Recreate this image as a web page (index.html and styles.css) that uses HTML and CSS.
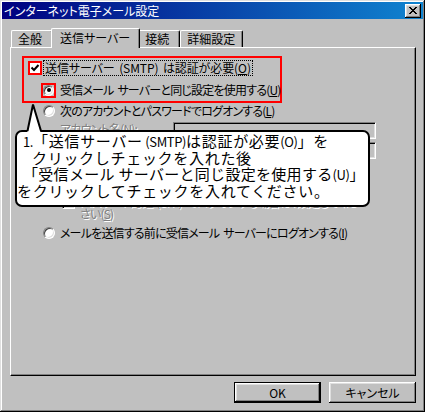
FILE: index.html
```html
<!DOCTYPE html>
<html lang="ja">
<head>
<meta charset="utf-8">
<title>インターネット電子メール設定</title>
<link rel="stylesheet" href="styles.css">
</head>
<body>
<div class="window">
  <div class="titlebar">
    <span class="title">インターネット電子メール設定</span>
    <span class="close"><svg width="8" height="7" viewBox="0 0 8 7"><path d="M0 0h2v1H0zM6 0h2v1H6zM1 1h2v1H1zM5 1h2v1H5zM2 2h4v1H2zM3 3h2v1H3zM2 4h4v1H2zM1 5h2v1H1zM5 5h2v1H5zM0 6h2v1H0zM6 6h2v1H6z" fill="#000"/></svg></span>
  </div>
  <div class="tabs">
    <div class="tab">全般</div>
    <div class="tab active">送信サーバー</div>
    <div class="tab">接続</div>
    <div class="tab">詳細設定</div>
  </div>
  <div class="panel">
    <div class="group">
      <div class="row row-auth">
        <span class="check hl"><svg width="10" height="10" viewBox="0 0 10 10"><polyline points="1.5,4.5 4,7 8.5,2" fill="none" stroke="#000" stroke-width="2"/></svg></span>
        <span class="focus">送信サーバー (SMTP) は認証が必要(<u>O</u>)</span>
      </div>
      <div class="row row-same">
        <span class="hlbox"><span class="radio small on"></span></span>
        <span class="lbl">受信メール サーバーと同じ設定を使用する(<u>U</u>)</span>
      </div>
    </div>
    <div class="row row-radio">
      <span class="radio"></span>
      <span class="lbl">次のアカウントとパスワードでログオンする(<u>L</u>)</span>
    </div>
    <div class="field">
      <span class="flabel disabled">アカウント名(<u>N</u>):</span>
      <span class="input"></span>
    </div>
    <div class="field">
      <span class="flabel disabled">パスワード(<u>P</u>):</span>
      <span class="input"></span>
    </div>
    <div class="row row-sub">
      <span class="check dis"></span>
      <span class="disabled">パスワードを保存する(<u>R</u>)</span>
    </div>
    <div class="row row-sub2">
      <span class="check dis"></span>
      <span class="disabled">セキュリティで保護されたパスワード認証 (SPA) に対応(<u>Q</u>)</span>
    </div>
    <div class="row row-wrap">
      <span class="check dis"></span>
      <span class="disabled wraplbl">パスワード認証 (SPA) でログオンする場合は、設定してくだ<br>さい(<u>S</u>)</span>
    </div>
    <div class="row row-radio last">
      <span class="radio"></span>
      <span class="lbl">メールを送信する前に受信メール サーバーにログオンする(<u>I</u>)</span>
    </div>

    <div class="callout">
      <svg class="pointer" width="17" height="31" viewBox="0 0 17 31"><polygon points="1,31 7,1 15,31" fill="#fff"/><polyline points="1.5,28 7,1.5 15,28" fill="none" stroke="#000" stroke-width="2"/></svg>
      <div class="cl l1"><span class="hw">1.</span>「送信サーバー<span class="hw"> (SMTP)</span>は認証が必要<span class="hw">(O)</span>」を</div>
      <div class="cl l2">クリックしチェックを入れた後</div>
      <div class="cl l3">「受信メール サーバーと同じ設定を使用する<span class="hw">(U)</span>」</div>
      <div class="cl l4">をクリックしてチェックを入れてください。</div>
    </div>
  </div>
  <div class="buttons">
    <span class="btn default">OK</span>
    <span class="btn">キャンセル</span>
  </div>
</div>
</body>
</html>
```

FILE: styles.css
```css
* { box-sizing: border-box; }
html, body { margin: 0; padding: 0; background: #c0c0c0; }
body {
  font-family: "Noto Sans CJK JP", "Noto Sans", sans-serif;
  font-size: 12px;
  color: #000;
  font-feature-settings: "palt";
}
u { text-decoration: underline; text-underline-offset: 1px; }

.window {
  width: 425px;
  height: 412px;
  padding: 2px;
  background: #c0c0c0;
  box-shadow: inset -1px -1px #000, inset 1px 1px #dfdfdf, inset -2px -2px #808080, inset 2px 2px #fff;
}

.titlebar {
  height: 17px;
  display: flex;
  align-items: center;
  justify-content: space-between;
  padding: 0 2px 0 2px;
  background: linear-gradient(90deg, #000080, #1084d0);
}
.title { color: #fff; font-size: 12px; line-height: 14px; }
.close {
  width: 16px;
  height: 14px;
  display: flex;
  align-items: center;
  justify-content: center;
  background: #c0c0c0;
  box-shadow: inset -1px -1px #000, inset 1px 1px #fff, inset -2px -2px #808080, inset 2px 2px #dfdfdf;
}

.tabs {
  display: flex;
  align-items: flex-end;
  height: 19px;
  margin: 9px 0 0 9px;
  position: relative;
  z-index: 2;
}
.tab {
  height: 17px;
  min-width: 42px;
  padding: 1px 7px 0 6px;
  line-height: 14px;
  border-top: 1px solid #fff;
  border-left: 1px solid #fff;
  border-right: 1px solid #000;
  border-radius: 2px 2px 0 0;
  box-shadow: inset -1px 0 #808080;
  background: #c0c0c0;
}
.tab.active {
  height: 20px;
  margin: 0 -2px -1px;
  padding: 2px 9px 0 8px;
  position: relative;
  z-index: 3;
}

.panel {
  position: relative;
  width: 406px;
  height: 329px;
  margin-left: 8px;
  padding: 8px 11px 0 11px;
  border: 1px solid;
  border-color: #fff #000 #000 #fff;
  box-shadow: inset -1px -1px #808080;
  letter-spacing: -0.8px;
  word-spacing: 2px;
}

.row { display: flex; align-items: center; height: 14px; line-height: 14px; white-space: nowrap; }
.lbl { flex: none; }

.group {
  width: 260px;
  height: 47px;
  border: 2px solid #ff0000;
}
.row-auth { margin-top: 3px; padding-left: 4px; gap: 2px; }
.row-same { margin-top: 8px; padding-left: 17px; gap: 4px; }
.row-radio { margin-top: 1px; padding-left: 21px; gap: 5px; }
.row-radio.last { margin-top: 6px; }

.check {
  width: 13px;
  height: 13px;
  flex: none;
  display: flex;
  align-items: center;
  justify-content: center;
  background: #fff;
  border: 1px solid;
  border-color: #808080 #fff #fff #808080;
  box-shadow: inset 1px 1px #000, inset -1px -1px #dfdfdf;
}
.check.hl {
  width: 14px;
  height: 14px;
  border: 2px solid #ff0000;
  box-shadow: none;
}
.check.dis { background: #c0c0c0; }

.focus { outline: 1px dotted #000; outline-offset: 0; padding: 0 1px; letter-spacing: -0.1px; }

.hlbox {
  width: 15px;
  height: 15px;
  flex: none;
  border: 2px solid #ff0000;
  display: flex;
  align-items: center;
  justify-content: center;
}

.radio {
  width: 12px;
  height: 12px;
  flex: none;
  border-radius: 50%;
  background: #fff;
  border: 1px solid;
  border-color: #808080 #fff #fff #808080;
  box-shadow: inset 1px 1px #404040, inset -1px -1px #dfdfdf;
  display: flex;
  align-items: center;
  justify-content: center;
}
.radio.small { width: 11px; height: 11px; }
.radio.on::after {
  content: "";
  width: 4px;
  height: 4px;
  border-radius: 50%;
  background: #000;
}

.field {
  display: flex;
  align-items: center;
  height: 17px;
  margin-top: 3px;
  padding-left: 38px;
}
.row-radio + .field { margin-top: 4px; }
.flabel { width: 113px; align-self: flex-start; line-height: 13px; white-space: nowrap; }
.input {
  width: 203px;
  height: 17px;
  background: #c0c0c0;
  border: 1px solid;
  border-color: #808080 #fff #fff #808080;
  box-shadow: inset 1px 1px #000, inset -1px -1px #dfdfdf;
}

.disabled { color: #808080; text-shadow: 1px 1px #fff; }

.row-sub { margin-top: 5px; padding-left: 40px; gap: 5px; height: 13px; }
.row-sub2 { margin-top: 3px; padding-left: 40px; gap: 5px; height: 13px; }
.row-wrap { margin-top: 3px; padding-left: 40px; gap: 5px; height: auto; align-items: flex-start; line-height: 12px; }
.wraplbl { white-space: nowrap; }

.callout {
  position: absolute;
  left: 4px;
  top: 82px;
  width: 355px;
  height: 77px;
  background: #fff;
  border: 2px solid #000;
  border-radius: 7px;
  padding-top: 1px;
  font-size: 15px;
  line-height: 16.7px;
  letter-spacing: 0.7px;
  word-spacing: 0;
  font-feature-settings: normal;
  white-space: nowrap;
}
.hw { font-size: 13px; letter-spacing: -0.4px; }
.pointer { position: absolute; left: 9px; top: -29px; }
.cl { height: 16.7px; }
.l1 { padding-left: 6px; }
.l2 { padding-left: 15px; }
.l3 { padding-left: 6px; letter-spacing: 0.3px; }
.l4 { padding-left: 0; }

.buttons {
  display: flex;
  justify-content: flex-end;
  gap: 8px;
  margin-top: 6px;
  padding-right: 7px;
}
.btn {
  width: 87px;
  height: 21px;
  display: flex;
  align-items: center;
  justify-content: center;
  background: #c0c0c0;
  box-shadow: inset -1px -1px #000, inset 1px 1px #fff, inset -2px -2px #808080, inset 2px 2px #dfdfdf;
  line-height: 14px;
}
.btn.default {
  border: 1px solid #000;
}
```
